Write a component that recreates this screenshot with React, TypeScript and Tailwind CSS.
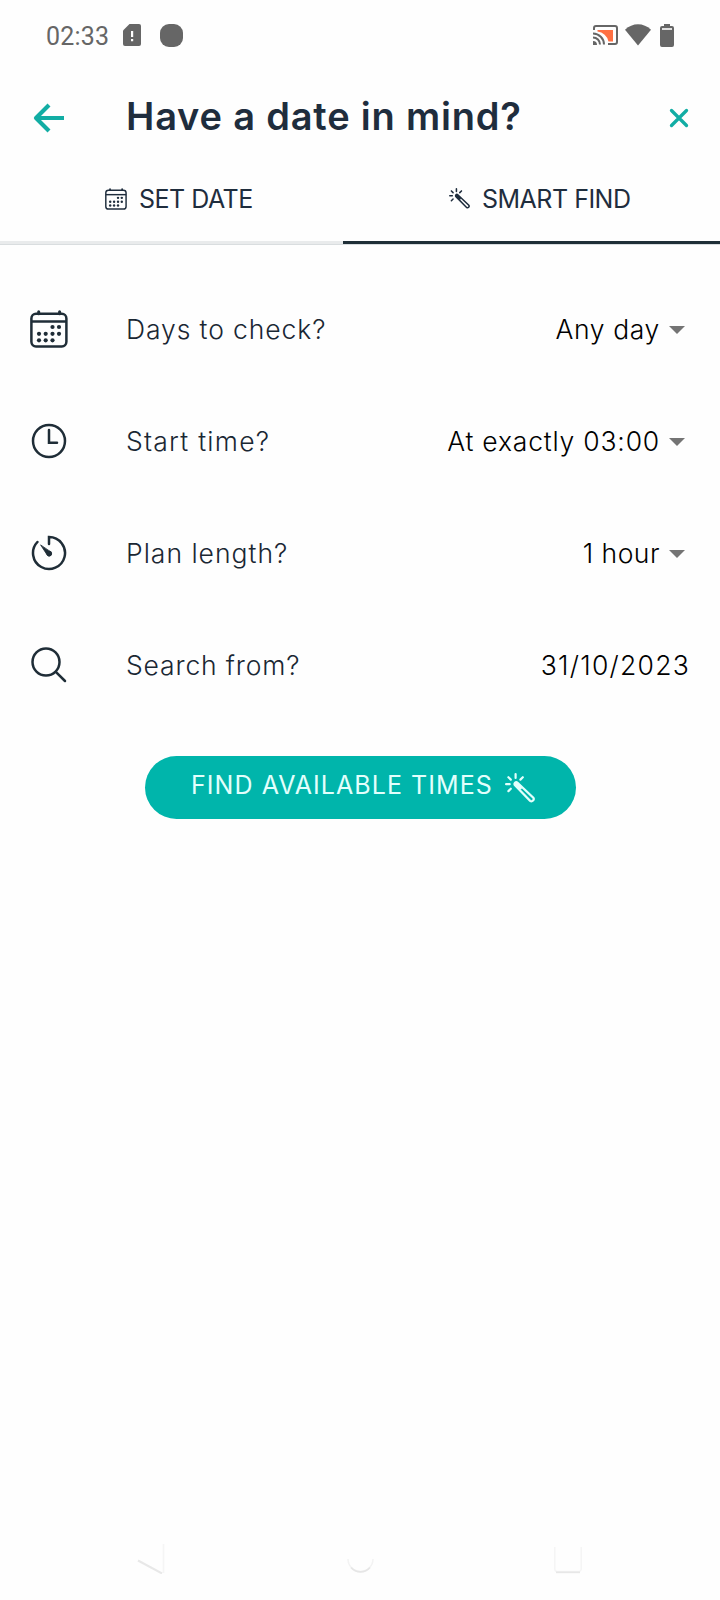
import type { ReactNode } from "react";

const calendarDots = [
  [22.5, 17], [29, 17],
  [9, 23.8], [15.7, 23.8], [22.5, 23.8], [29, 23.8],
  [9, 30.3], [15.7, 30.3], [22.5, 30.3],
];

function CalendarIcon({ className }: { className: string }) {
  return (
    <svg viewBox="0 0 38 38" className={className} fill="none" stroke="currentColor" strokeWidth="2.5">
      <rect x="1.4" y="3.8" width="35" height="32.6" rx="4.6" />
      <path d="M1.5 11.5h35" />
      <path d="M8.7 1.8v2M29.6 1.8v2" strokeWidth="3" strokeLinecap="round" />
      <g fill="currentColor" stroke="none">
        {calendarDots.map(([x, y]) => (
          <circle key={`${x}-${y}`} cx={x} cy={y} r="2.1" />
        ))}
      </g>
    </svg>
  );
}

function ClockIcon() {
  return (
    <svg viewBox="0 0 36 36" className="size-9" fill="none" stroke="currentColor" strokeWidth="2.5">
      <circle cx="18" cy="18" r="16" />
      <path d="M18 7v12.7h8" strokeLinecap="round" />
    </svg>
  );
}

function TimerIcon() {
  return (
    <svg viewBox="0 0 36 36" className="size-9" fill="none" stroke="currentColor" strokeWidth="2.5" strokeLinecap="round">
      <path d="M18 9V2A16 16 0 1 1 6.4 7" />
      <path d="M9.8 10.2 16.3 20.2a2.4 2.4 0 0 0 3.8-3z" fill="currentColor" strokeWidth=".8" strokeLinejoin="round" />
      <circle cx="18.2" cy="18.5" r="2.7" fill="currentColor" stroke="none" />
    </svg>
  );
}

function SearchIcon() {
  return (
    <svg viewBox="0 0 36 36" className="size-9" fill="none" stroke="currentColor" strokeWidth="2.5" strokeLinecap="round">
      <circle cx="15" cy="15" r="13.500" />
      <path d="M24.800 24.800 34 34" />
    </svg>
  );
}

function WandIcon({ className }: { className: string }) {
  return (
    <svg viewBox="0 0 30 30" className={className} fill="none" stroke="currentColor" strokeWidth="2.2" strokeLinecap="round">
      <path d="M10.6 1.1v3.800M3.400 4.200l2.400 2.400M17.800 4.200l-2.400 2.400M1.100 11.200h3.600M3.400 18.100l2.400-2.400" />
      <path d="M10 9.7a1.8 1.8 0 0 1 2.5 0L28.3 24.6a2.3 2.3 0 0 1-3.2 3.2L10 12.3a1.8 1.8 0 0 1 0-2.6z" />
      <path d="M11.5 11l3.6 3.5" strokeWidth="4" />
    </svg>
  );
}

interface RowProps {
  icon: ReactNode;
  label: string;
  labelClass: string;
  value: string;
  valueClass: string;
  select?: boolean;
}

function Row({ icon, label, labelClass, value, valueClass, select = true }: RowProps) {
  return (
    <div className="flex h-28 items-center pl-[30px] pr-[31px] text-[26.5px] font-light leading-8">
      <div className="flex w-[38px] justify-center text-[#1f2d37]">{icon}</div>
      <span className={`ml-[58px] whitespace-nowrap text-[#1a2733] ${labelClass}`}>{label}</span>
      <span className={`ml-auto whitespace-nowrap text-black ${valueClass}`}>{value}</span>
      {select && (
        <svg viewBox="0 0 16 8" className="ml-[9px] mr-1 mt-px h-2 w-4 fill-[#747474]">
          <path d="M0 0h16L8 8z" />
        </svg>
      )}
    </div>
  );
}

export default function App() {
  return (
    <div className="flex h-[1600px] w-[720px] flex-col bg-[#fefefe] font-['Inter','Liberation_Sans',sans-serif] text-[#1f2d3d]">
      <header className="flex h-[70px] items-center pl-[46px] pr-[46px] text-[#666]">
        <span className="mt-[3px] w-[63px] whitespace-nowrap font-['Roboto',sans-serif] text-[25px] tracking-[0.2px]">02:33</span>
        <svg viewBox="0 0 18 22" className="ml-[14px] h-[22px] w-[18px] fill-[#666]">
          <path d="M6.5 0H16a2 2 0 0 1 2 2v18a2 2 0 0 1-2 2H2a2 2 0 0 1-2-2V6.5z" />
          <path d="M8 7h2.2v6H8zM8 15h2.2v2.2H8z" fill="#fff" />
        </svg>
        <div className="ml-[19px] size-[23px] rounded-[9px] bg-[#666]" />
        <svg viewBox="0 0 25 20" className="ml-auto h-5 w-[25px]" fill="none" stroke="#666" strokeWidth="2">
          <path d="M1 5V3a2 2 0 0 1 2-2h19a2 2 0 0 1 2 2v14a2 2 0 0 1-2 2h-7" />
          <path d="M4.500 5h15.500v11.500h-4.500A12.500 12.500 0 0 0 4.500 6.500z" fill="#ff7043" stroke="none" />
          <path d="M0 8.500a11 11 0 0 1 11 11M0 12.500a7 7 0 0 1 7 7" />
          <path d="M0 16a4 4 0 0 1 4 4H0z" fill="#666" stroke="none" />
        </svg>
        <svg viewBox="0 0 26 22" className="ml-[7px] h-[22px] w-[26px] fill-[#666]">
          <path d="M0 5.800C7.500-1.600 18.500-1.600 26 5.800L13 21.500z" />
        </svg>
        <svg viewBox="0 0 14 23" className="ml-[9px] h-[23px] w-[14px] fill-[#666]">
          <path d="M4 0h6v2h2a2 2 0 0 1 2 2v17a2 2 0 0 1-2 2H2a2 2 0 0 1-2-2V4a2 2 0 0 1 2-2h2z" />
          <path d="M2 4.200h10v1.600H2z" fill="#fff" />
        </svg>
      </header>

      <div className="flex h-[94px] items-center pl-[33px] pr-[31px] text-[#12ada4]">
        <svg viewBox="0 0 32 30" className="mt-[2px] h-[30px] w-8" fill="none" stroke="currentColor" strokeWidth="4.200">
          <path d="M31 15H4M16 2 3 15 16 28" strokeLinejoin="round" />
        </svg>
        <h1 className="-mt-[3px] ml-[61px] whitespace-nowrap text-[38px] font-semibold leading-[46px] tracking-[0.8px] text-[#1f2d3d]">Have a date in mind?</h1>
        <svg viewBox="0 0 20 20" className="ml-auto mt-[2px] size-5" fill="none" stroke="currentColor" strokeWidth="3.300" strokeLinecap="round">
          <path d="M2.500 2.500l15 15M17.500 2.500l-15 15" />
        </svg>
      </div>

      <div className="flex h-20 text-[25px] leading-[30px]">
        <div className="flex w-[343px] items-start border-b-[3px] border-[#e9ebec] pl-[105px] pt-5">
          <CalendarIcon className="mt-1 size-[22px]" />
          <span className="ml-3 whitespace-nowrap tracking-[-0.5px]">SET DATE</span>
        </div>
        <div className="flex flex-1 items-start border-b-[3px] border-[#1f2f37] pl-[106px] pt-5">
          <WandIcon className="mt-1 size-[21px]" />
          <span className="ml-3 whitespace-nowrap tracking-[-0.5px]">SMART FIND</span>
        </div>
      </div>
      <div className="h-px bg-[#d9dddf]" />

      <main className="flex flex-col items-center pt-7">
        <div className="w-full">
          <Row icon={<CalendarIcon className="size-[38px]" />} label="Days to check?" labelClass="tracking-[0.9px]" value="Any day" valueClass="tracking-[0.65px]" />
          <Row icon={<ClockIcon />} label="Start time?" labelClass="tracking-[1.25px]" value="At exactly 03:00" valueClass="tracking-[0.8px]" />
          <Row icon={<TimerIcon />} label="Plan length?" labelClass="tracking-[1px]" value="1 hour" valueClass="tracking-[0.5px]" />
          <Row icon={<SearchIcon />} label="Search from?" labelClass="tracking-[0.85px]" value="31/10/2023" valueClass="-mr-px tracking-[1.25px]" select={false} />
        </div>
        <button className="mr-[-1px] mt-[35px] flex h-[63px] w-[431px] items-center rounded-full bg-[#00b5ab] pl-[45px] text-[25px] leading-[30px] text-[#e2fffc]">
          <span className="mb-[5px] ml-px w-[303px] whitespace-nowrap text-left tracking-[1.05px]">FIND AVAILABLE TIMES</span>
          <WandIcon className="ml-[11px] size-[30px]" />
        </button>
      </main>

      <nav className="mt-auto flex h-[60px] items-start pl-[137px]">
        <svg viewBox="0 0 28 32" className="mt-[2px] h-8 w-7" fill="none" strokeWidth="1.600">
          <path d="M26.500 2v29" stroke="#f5f5f5" />
          <path d="M1 18.500 25 31.500" stroke="#e8e8e8" strokeWidth="2" />
        </svg>
        <svg viewBox="0 0 28 32" className="ml-[181px] mt-[2px] h-8 w-7" fill="none">
          <path d="M2 17a12.500 12.500 0 1 0 25 0" stroke="#f3f3f3" strokeWidth="1.500" />
          <path d="M5 25.500a12.500 12.500 0 0 0 19 0" stroke="#e6e6e6" strokeWidth="1.800" />
        </svg>
        <svg viewBox="0 0 28 32" className="ml-[180px] mt-[2px] h-8 w-7" fill="none">
          <path d="M.8 5v22a2.500 2.500 0 0 0 2.500 2.500h21.400a2.500 2.500 0 0 0 2.500-2.500V5" stroke="#f5f5f5" strokeWidth="1.500" />
          <path d="M2 30.300h24" stroke="#e7e7e7" strokeWidth="1.800" />
        </svg>
      </nav>
    </div>
  );
}
